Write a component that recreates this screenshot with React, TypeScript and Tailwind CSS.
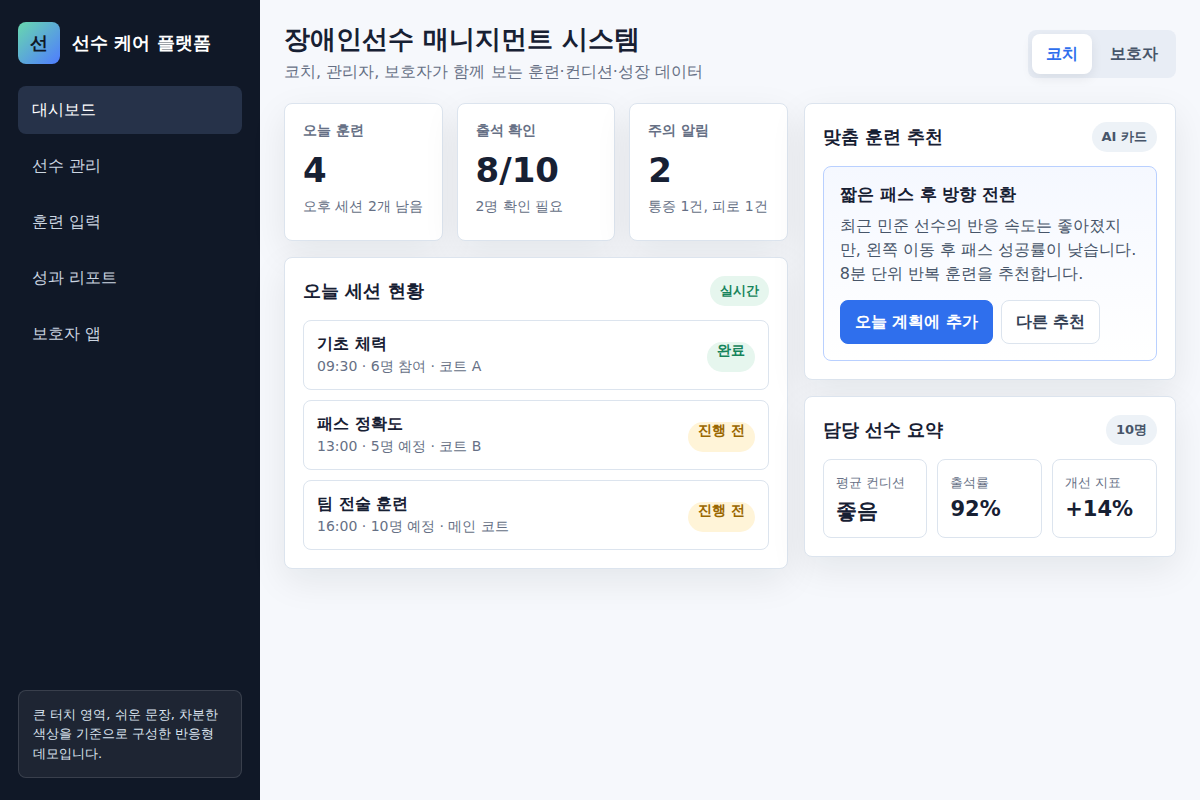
import { FC, ReactNode, useState } from "react";

const menus = ["대시보드", "선수 관리", "훈련 입력", "성과 리포트", "보호자 앱"];
const roles = ["코치", "보호자"];

const stats = [
  { label: "오늘 훈련", value: "4", note: "오후 세션 2개 남음" },
  { label: "출석 확인", value: "8/10", note: "2명 확인 필요" },
  { label: "주의 알림", value: "2", note: "통증 1건, 피로 1건" },
];

const sessions = [
  { title: "기초 체력", info: "09:30 · 6명 참여 · 코트 A", status: "완료", done: true },
  { title: "패스 정확도", info: "13:00 · 5명 예정 · 코트 B", status: "진행 전", done: false },
  { title: "팀 전술 훈련", info: "16:00 · 10명 예정 · 메인 코트", status: "진행 전", done: false },
];

const summary = [
  { label: "평균 컨디션", value: "좋음" },
  { label: "출석률", value: "92%" },
  { label: "개선 지표", value: "+14%" },
];

const card =
  "rounded-lg border border-[#dce4ee] bg-white p-[18px] shadow-[0_12px_36px_rgba(16,28,28,0.08)]";

const Panel: FC<{ title: string; badge: string; green?: boolean; children: ReactNode }> = ({
  title,
  badge,
  green,
  children,
}) => {
  return (
    <section className={card}>
      <div className="flex items-center justify-between gap-3 mb-3.5">
        <h2 className="text-[18px] leading-[22px] font-bold">{title}</h2>
        <span
          className={`inline-flex items-center h-[30px] rounded-full px-2.5 text-[13px] font-bold ${
            green ? "bg-[#e6f6ee] text-[#16845b]" : "bg-[#edf2f7] text-[#475569]"
          }`}
        >
          {badge}
        </span>
      </div>
      {children}
    </section>
  );
};

const App: FC = () => {
  const [menu, setMenu] = useState("대시보드");
  const [role, setRole] = useState("코치");

  return (
    <div
      lang="ko"
      className="grid grid-cols-[260px_minmax(0,1fr)] min-h-screen bg-[#f6f8fc] text-[#172033] font-['DejaVu_Sans',sans-serif] leading-normal"
    >
      <aside className="flex flex-col gap-[22px] bg-[#101827] px-[18px] py-[22px]">
        <div className="flex items-center gap-3 text-[18px] leading-6 font-bold text-white">
          <span className="grid place-items-center size-[42px] rounded-lg bg-[linear-gradient(135deg,#68d8ae,#4f7cff)] text-[#101827]">
            선
          </span>
          <strong>선수 케어 플랫폼</strong>
        </div>
        <nav className="grid gap-2">
          {menus.map((item) => (
            <button
              key={item}
              onClick={() => setMenu(item)}
              className={`h-12 rounded-lg px-3.5 text-left cursor-pointer ${
                menu === item ? "bg-[#263249] text-white" : "text-[#cbd5e1]"
              }`}
            >
              {item}
            </button>
          ))}
        </nav>
        <p className="mt-auto rounded-lg border border-white/12 bg-white/6 p-3.5 text-[13px] leading-[1.5] text-[#dbe4f0]">
          큰 터치 영역, 쉬운 문장, 차분한 색상을 기준으로 구성한 반응형 데모입니다.
        </p>
      </aside>

      <main className="px-6 py-[22px]">
        <header className="flex items-center justify-between gap-4 mb-[18px]">
          <div>
            <h1 className="text-[26px] leading-[35px] font-bold">장애인선수 매니지먼트 시스템</h1>
            <p className="mt-0.5 leading-[26px] text-[#667085]">
              코치, 관리자, 보호자가 함께 보는 훈련·컨디션·성장 데이터
            </p>
          </div>
          <div className="flex gap-1 rounded-lg bg-[#e8edf5] p-1">
            {roles.map((item) => (
              <button
                key={item}
                onClick={() => setRole(item)}
                className={`h-10 rounded-lg px-3.5 leading-5 font-bold cursor-pointer ${
                  role === item
                    ? "bg-white text-[#2f6fed] shadow-[0_4px_12px_rgba(16,24,32,0.08)]"
                    : "text-[#475569]"
                }`}
              >
                {item}
              </button>
            ))}
          </div>
        </header>

        <div className="grid grid-cols-[minmax(0,1.15fr)_minmax(0,0.85fr)] items-start gap-4">
          <div className="grid gap-4">
            <div className="grid grid-cols-3 gap-3.5">
              {stats.map((stat) => (
                <article key={stat.label} className={`${card} min-h-[138px]`}>
                  <p className="text-sm leading-4 font-bold text-[#667085]">{stat.label}</p>
                  <strong className="block mt-2 mb-1 text-[34px] leading-12">{stat.value}</strong>
                  <p className="text-sm leading-4 text-[#667085]">{stat.note}</p>
                </article>
              ))}
            </div>

            <Panel title="오늘 세션 현황" badge="실시간" green>
              <div className="grid gap-2.5">
                {sessions.map((session) => (
                  <div
                    key={session.title}
                    className="flex items-center justify-between gap-3 rounded-lg border border-[#dce4ee] px-[13px] py-3 min-h-[70px]"
                  >
                    <div>
                      <strong className="block leading-5">{session.title}</strong>
                      <span className="block mt-0.5 text-sm leading-5 text-[#667085]">
                        {session.info}
                      </span>
                    </div>
                    <span
                      className={`block mt-1 h-[30px] rounded-full px-2.5 text-sm leading-4 font-bold ${
                        session.done ? "bg-[#e6f6ee] text-[#16845b]" : "bg-[#fff4d8] text-[#9a6700]"
                      }`}
                    >
                      {session.status}
                    </span>
                  </div>
                ))}
              </div>
            </Panel>
          </div>

          <div className="grid gap-4">
            <Panel title="맞춤 훈련 추천" badge="AI 카드">
              <div className="rounded-lg border border-[#b9d0ff] bg-[linear-gradient(180deg,#f5f8ff,#ffffff)] p-4">
                <h3 className="text-[17px] leading-[23px] font-bold">짧은 패스 후 방향 전환</h3>
                <p className="mt-2 leading-6 text-[#475569]">
                  최근 민준 선수의 반응 속도는 좋아졌지만, 왼쪽 이동 후 패스 성공률이 낮습니다. 8분
                  단위 반복 훈련을 추천합니다.
                </p>
                <div className="flex flex-wrap gap-2 mt-3.5">
                  <button className="h-11 rounded-lg border border-[#2f6fed] bg-[#2f6fed] px-3.5 font-bold text-white cursor-pointer">
                    오늘 계획에 추가
                  </button>
                  <button className="h-11 rounded-lg border border-[#dce4ee] bg-white px-3.5 font-bold text-[#344054] cursor-pointer">
                    다른 추천
                  </button>
                </div>
              </div>
            </Panel>

            <Panel title="담당 선수 요약" badge="10명">
              <div className="grid grid-cols-3 gap-2.5">
                {summary.map((item) => (
                  <div
                    key={item.label}
                    className="rounded-lg border border-[#dce4ee] px-3 pt-3.5 pb-3"
                  >
                    <span className="block text-[13px] leading-[normal] text-[#667085]">
                      {item.label}
                    </span>
                    <strong className="block mt-[5px] text-[21px] leading-[normal]">
                      {item.value}
                    </strong>
                  </div>
                ))}
              </div>
            </Panel>
          </div>
        </div>
      </main>
    </div>
  );
};

export default App;
